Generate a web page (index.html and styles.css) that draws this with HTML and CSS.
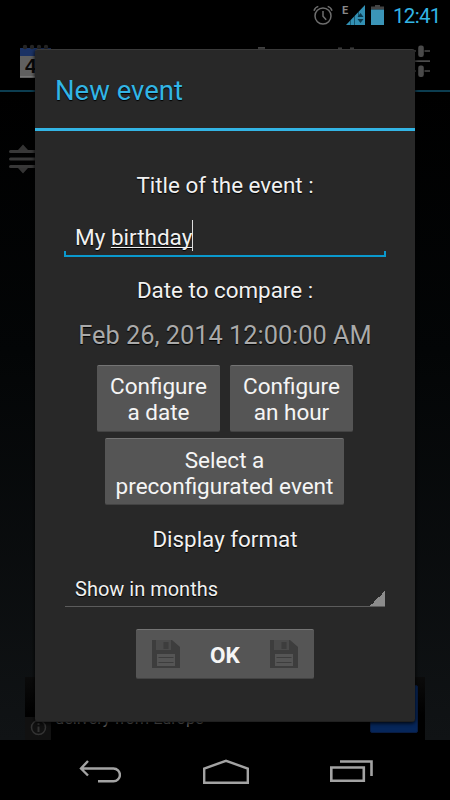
FILE: index.html
```html
<!DOCTYPE html>
<html lang="en">
<head>
<meta charset="utf-8">
<title>New event</title>
<link rel="stylesheet" href="styles.css">
</head>
<body>
<div class="phone">
  <header class="status">
    <svg class="alarm" width="20" height="20" viewBox="0 0 20 20" fill="none" stroke="#6e6e6e" stroke-width="1.5"><circle cx="10" cy="11" r="8"/><path d="M10 6v5.300l3.200 3.400M1 5.700C1.700 3.500 3.200 2 5.300 1.400M19 5.700C18.300 3.500 16.800 2 14.700 1.400"/></svg>
    <span class="network">E</span>
    <svg class="signal" width="19" height="20" viewBox="0 0 19 20"><path d="M0 20L19 0v20z" fill="#3290b4"/><path d="M4.500 15v5M8.500 11v9M12.500 7v5" stroke="#0d4055" stroke-width=".7"/><path d="M11.500 12l3-4 3 4zM11.500 14l3 4 3-4z" fill="#0c3a4e"/></svg>
    <svg class="battery" width="13" height="20" viewBox="0 0 13 20"><path d="M0 4.500V1.500h4V0h5v1.500h4v3z" fill="#444"/><path d="M0 4.500h13V20H0z" fill="#3b95b8"/></svg>
    <time class="clock">12:41</time>
  </header>
  <div class="actionbar">
    <svg class="calendar" width="31" height="35" viewBox="0 0 31 35"><path d="M0 4h31v8H0z" fill="#1b3264"/><path d="M0 12h31v22H0z" fill="#606060"/><path d="M0 32.500h31" stroke="#777"/><g fill="#252525"><circle cx="5" cy="3" r="2.200"/><circle cx="12" cy="3" r="2.200"/><circle cx="19" cy="3" r="2.200"/><circle cx="26" cy="3" r="2.200"/></g><text x="5" y="29" class="day">4</text></svg>
    <svg class="tools" width="173" height="32" viewBox="0 0 173 32" fill="#4a4a4a"><path d="M0 2h7v3H0zM80 2.500h4v2h-4zM92 2.500h4v2h-4z"/><path d="M150 5.200h8v1.500h-8zM166.500 5.200h5.500v1.500h-5.500zM150 15.200h22v1.800h-22zM150 25.200h8v1.500h-8zM166.500 25.200h5.500v1.500h-5.500z"/><rect x="160.200" y=".5" width="5.600" height="11.500" rx="2.200"/><rect x="160.200" y="20.500" width="5.600" height="11.500" rx="2.200"/></svg>
  </div>
  <main class="list">
    <svg class="handle" width="30" height="30" viewBox="0 0 30 30"><path d="M10 6l5-5.500L20 6zM10 24l5 5.500L20 24z" fill="#343434"/><path d="M2.500 7.500h26M2.500 15h26M2.500 22.500h26" stroke="#383838" stroke-width="3" stroke-linecap="round"/></svg>
    <aside class="ad">
      <svg class="info" width="26" height="23" viewBox="0 0 26 23"><path d="M0 0h26v23H0z" fill="#111"/><circle cx="13.500" cy="10.500" r="7" fill="none" stroke="#333" stroke-width="1.500"/><path d="M13.500 6v2M13.500 9.500v5.500" stroke="#333" stroke-width="2"/></svg>
      <span class="ad-text">delivery from Europe</span>
      <span class="ad-button"></span>
    </aside>
  </main>
  <nav class="navbar">
    <svg width="42" height="24" viewBox="0 0 42 24" fill="none" stroke="#a3a3a3" stroke-width="2.400"><path d="M9 1L2 8.500 9 15.500M2 8.500h32.500a6.400 6.400 0 0 1 0 12.800H19"/></svg>
    <svg width="46" height="26" viewBox="0 0 46 26" fill="none" stroke="#a3a3a3" stroke-width="2.400"><path d="M1.200 23.700V9.500L23 1.800 44.800 9.500v14.200z"/></svg>
    <svg width="43" height="23" viewBox="0 0 43 23" fill="none" stroke="#a3a3a3" stroke-width="2.600"><path d="M1.300 7.500h32.500v13.200H1.300zM10 1.500h31.500V16"/></svg>
  </nav>

  <section class="dialog">
    <h1 class="title"><span>New event</span></h1>
    <label class="label label-title">Title of the event :</label>
    <div class="input"><span class="value">My <u>birthday</u></span><i class="caret"></i></div>
    <label class="label label-date">Date to compare :</label>
    <p class="date">Feb 26, 2014 12:00:00 AM</p>
    <div class="row">
      <button class="btn">Configure<br>a date</button>
      <button class="btn">Configure<br>an hour</button>
    </div>
    <button class="btn btn-wide">Select a<br>preconfigurated event</button>
    <label class="label label-format">Display format</label>
    <div class="spinner"><span>Show in months</span></div>
    <button class="btn btn-ok">
      <svg width="28" height="28" viewBox="0 0 28 28"><path d="M0 0h20l8 7v21H0z" fill="#3d3d3d"/><path d="M4 0h15v10H4z" fill="#4b4b4b"/><path d="M11.500 2h5v7h-5z" fill="#3d3d3d"/><path d="M5 14h18v12H5z" fill="#555"/><path d="M6.500 17.500h15M6.500 22.500h15" stroke="#3d3d3d" stroke-width="1.200"/></svg>
      <span>OK</span>
      <svg width="28" height="28" viewBox="0 0 28 28"><path d="M0 0h20l8 7v21H0z" fill="#3d3d3d"/><path d="M4 0h15v10H4z" fill="#4b4b4b"/><path d="M11.500 2h5v7h-5z" fill="#3d3d3d"/><path d="M5 14h18v12H5z" fill="#555"/><path d="M6.500 17.500h15M6.500 22.500h15" stroke="#3d3d3d" stroke-width="1.200"/></svg>
    </button>
  </section>
</div>
</body>
</html>
```
FILE: styles.css
```css
* { box-sizing: border-box; }
body { margin: 0; background: #000; font-family: Roboto, sans-serif; }
.phone { position: relative; display: flex; flex-direction: column; width: 450px; height: 800px; overflow: hidden; background: #000; }

.status { display: flex; align-items: flex-start; height: 32px; padding: 5px 0 0 313px; }
.network { width: 7px; margin-left: 9px; font-size: 11px; line-height: 12px; font-weight: 700; color: #888; }
.signal { margin-left: -3px; }
.battery { margin-left: 6px; }
.clock { margin-left: 9px; font-size: 20.500px; line-height: 23px; letter-spacing: -0.7px; color: #33b5e5; white-space: nowrap; }

.actionbar { display: flex; justify-content: space-between; height: 60px; padding: 12px 19px 0 20px; border-bottom: 2px solid #0c3d50; }
.tools { margin-top: 1px; }
.day { font: 700 21px "Liberation Sans", sans-serif; fill: #080808; }

.list { display: flex; flex-direction: column; justify-content: space-between; height: 648px; padding: 52px 25px 0 8px; background: linear-gradient(#000 0%, #030506 40%, #101315 100%); }
.ad { display: flex; align-items: flex-end; height: 63px; margin-left: 17px; background: linear-gradient(#0b0b0b, #000 60%); }
.ad-text { flex: 1; padding-left: 4px; align-self: flex-start; margin-top: 32px; font-size: 16.300px; line-height: 20px; color: #5c5c5c; }
.ad-button { width: 48px; height: 48px; margin: 0 7px 7px 0; border-radius: 2px; border: 1px solid #091c42; background: #06265a; }

.navbar { display: flex; justify-content: space-between; align-items: center; height: 60px; padding: 3px 77px 0 79px; background: #000; }

.dialog { position: absolute; left: 35px; top: 49px; width: 380px; height: 673px; display: flex; flex-direction: column; align-items: center; background: #282828; border-radius: 3px; border-top: 1px solid #3a3a3a; border-bottom: 1px solid #202020; box-shadow: 0 1px 4px #000; color: #f1f1f1; text-shadow: 0 1px 1px #000; }
.title { width: 100%; height: 81px; margin: 0; padding: 25px 20px 0; border-bottom: 3px solid #33b5e5; font-size: 27.500px; line-height: 32px; font-weight: 400; color: #33b5e5; white-space: nowrap; }
.label { font-size: 22.400px; line-height: 28px; white-space: nowrap; }
.label-title { margin-top: 40px; }
.input { display: flex; align-items: flex-start; width: 322px; height: 40px; margin-top: 18px; padding: 6px 10px 0 11px; font-size: 22.500px; line-height: 28px; background: linear-gradient(#0a99cd, #0a99cd) left bottom / 2px 6px no-repeat, linear-gradient(#0a99cd, #0a99cd) right bottom / 2px 6px no-repeat, linear-gradient(#0a99cd, #0a99cd) bottom / 100% 2px no-repeat; }
.value { white-space: pre; }
.value u { text-decoration-thickness: 1px; text-underline-offset: 2px; text-decoration-skip-ink: none; }
.caret { width: 1px; height: 31px; margin-top: -3px; background: #ddd; }
.label-date { margin-top: 19px; }
.date { margin: 15px 0 0; font-size: 25.350px; line-height: 32px; color: #aaa; white-space: nowrap; }
.row { display: flex; gap: 10px; margin-top: 14px; }
.btn { display: block; width: 123px; height: 67px; padding: 0; border: 0; border-top: 1px solid #747474; border-bottom: 1px solid #434343; border-radius: 2px; background: #555; color: #f5f5f5; font: 400 22.500px/26px Roboto, sans-serif; text-align: center; white-space: nowrap; text-shadow: none; }
.btn-wide { width: 239px; margin-top: 6px; margin-right: 1px; padding-top: 2px; }
.label-format { margin-top: 20px; }
.spinner { width: 320px; height: 35px; margin-top: 19px; padding: 4px 10px 0; border-bottom: 1px solid #5c5c5c; font-size: 20px; line-height: 26px; background: linear-gradient(135deg, transparent 50%, #8c8c8c 50%) right bottom / 15px 15px no-repeat; }
.btn-ok { display: flex; align-items: center; justify-content: space-between; width: 178px; height: 50px; margin-top: 22px; padding: 0 16px; font-weight: 700; }
.btn-ok span { padding-top: 2px; }
```
